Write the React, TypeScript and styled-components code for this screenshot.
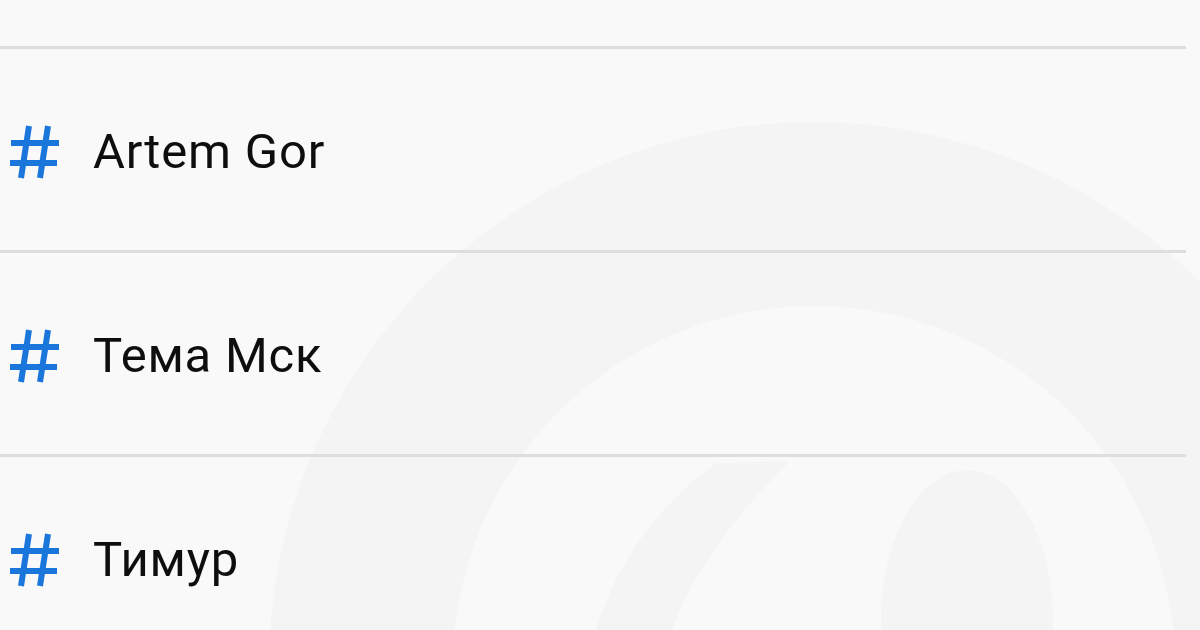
import React from "react";
import styled, { createGlobalStyle } from "styled-components";

interface ITag {
  id: number;
  name: string;
}

const tags: ITag[] = [
  { id: 1, name: "Artem Gor" },
  { id: 2, name: "Тема Мск" },
  { id: 3, name: "Тимур" },
];

const HashIcon: React.FC = () => (
  <HashS viewBox="0 0 50 54" aria-hidden="true">
    <line x1="19" y1="1" x2="11" y2="53" />
    <line x1="38" y1="1" x2="30" y2="53" />
    <line x1="1" y1="18" x2="49" y2="18" />
    <line x1="0" y1="38" x2="47" y2="38" />
  </HashS>
);

// faint logo behind the list
const Watermark: React.FC = () => (
  <WatermarkS width="1200" height="630" viewBox="0 0 1200 630" aria-hidden="true">
    <path
      fillRule="evenodd"
      d="M814 122a545 545 0 1 1 0 1090a545 545 0 1 1 0-1090z M814 306a361 361 0 1 0 0 722a361 361 0 1 0 0-722z"
    />
    <path d="M716 463 L790 461 C740 510 692 570 668 640 L593 640 C615 560 660 505 716 463 Z" />
    <ellipse cx="967" cy="620" rx="86" ry="150" />
  </WatermarkS>
);

const App: React.FC = () => {
  return (
    <PageS>
      <GlobalS />
      <Watermark />
      <ListS>
        {tags.map((tag) => (
          <RowS key={tag.id}>
            <HashIcon />
            <NameS>{tag.name}</NameS>
          </RowS>
        ))}
      </ListS>
    </PageS>
  );
};

export default App;

const GlobalS = createGlobalStyle`
  html, body {
    margin: 0;
    padding: 0;
    background: #f9f9f9;
  }
  * {
    box-sizing: border-box;
  }
`;

const PageS = styled.div`
  position: relative;
  width: 1200px;
  height: 630px;
  overflow: hidden;
  background: #f9f9f9;
  font-family: Roboto, "Noto Sans", "Liberation Sans", sans-serif;
`;

const WatermarkS = styled.svg`
  position: absolute;
  left: 0;
  top: 0;
  pointer-events: none;
  fill: #f4f4f4;
`;

const ListS = styled.ul`
  position: relative;
  list-style: none;
  margin: 0;
  padding: 46px 14px 0 0;
`;

const RowS = styled.li`
  display: flex;
  align-items: center;
  gap: 33px;
  height: 204px;
  padding: 4px 0 0 10px;
  border-top: 3px solid #dedede;
`;

const HashS = styled.svg`
  width: 50px;
  height: 54px;
  flex-shrink: 0;
  stroke: #1b76dc;
  stroke-width: 6;
  fill: none;
`;

const NameS = styled.span`
  font-size: 49px;
  letter-spacing: 0.8px;
  color: #0e0e0e;
  line-height: 1;
`;
